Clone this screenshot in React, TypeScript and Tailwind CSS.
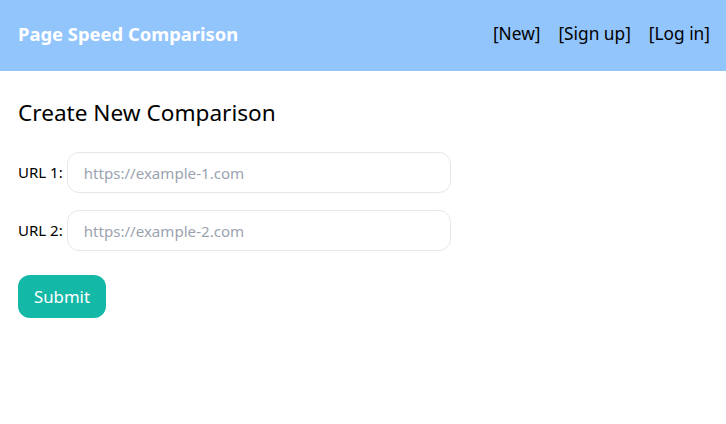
import React from 'react';

const App = () => {
  return (
    <div className="min-h-screen bg-white text-black" style={{ fontFamily: '"Noto Sans", "Open Sans", sans-serif' }}>
      <header className="h-[71px] bg-[#93c5fd] flex items-center justify-between pl-[18px] pr-[16px] pb-[3px]">
        <div className="text-white font-bold text-[18.4px]">Page Speed Comparison</div>
        <nav className="flex gap-[18px] text-[17.3px]">
          <a href="#">[New]</a>
          <a href="#">[Sign up]</a>
          <a href="#">[Log in]</a>
        </nav>
      </header>

      <main className="px-[18px] pt-[27px]">
        <h1 className="text-[22.6px] leading-[30px] mb-[24px]">Create New Comparison</h1>
        <form className="flex flex-col gap-[17px]" onSubmit={(e) => e.preventDefault()}>
          <div className="flex items-center gap-[4px]">
            <label className="text-[15px]">URL 1:</label>
            <input
              placeholder="https://example-1.com"
              className="w-[384px] h-[41px] rounded-[12px] border border-[#e5e7eb] px-[16px] text-[15.1px] placeholder:text-[#9ca3af] outline-none"
            />
          </div>
          <div className="flex items-center gap-[4px]">
            <label className="text-[15px]">URL 2:</label>
            <input
              placeholder="https://example-2.com"
              className="w-[384px] h-[41px] rounded-[12px] border border-[#e5e7eb] px-[16px] text-[15.1px] placeholder:text-[#9ca3af] outline-none"
            />
          </div>
          <div className="pt-[7px]">
            <button type="submit" className="w-[88px] h-[43px] rounded-[12px] bg-[#14b8a6] text-white text-[16.8px]">
              Submit
            </button>
          </div>
        </form>
      </main>
    </div>
  );
};

export default App;
